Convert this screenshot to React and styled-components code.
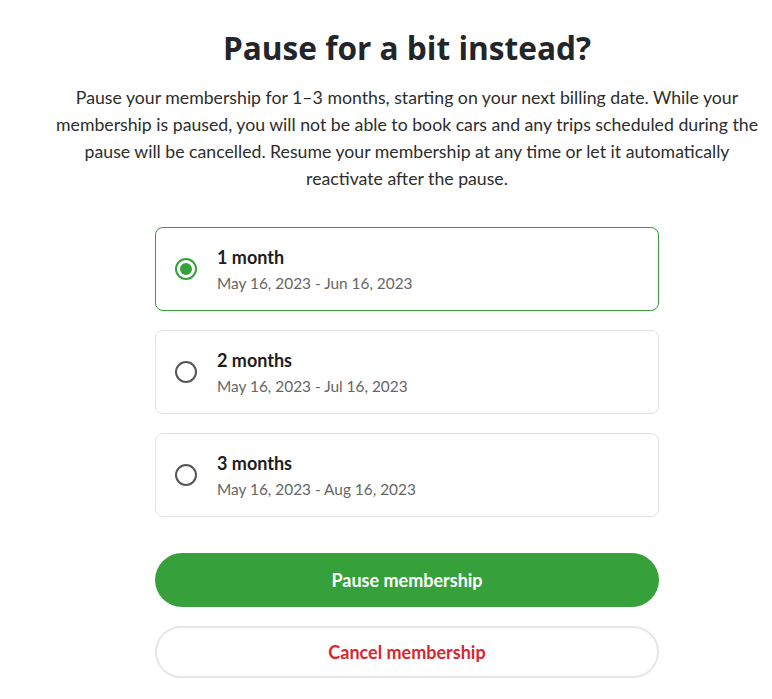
import React, { useState } from "react";
import styled, { createGlobalStyle } from "styled-components";

const GlobalStyle = createGlobalStyle`
  body {
    margin: 0;
    background: #ffffff;
    font-family: Lato, "Liberation Sans", sans-serif;
    color: #222;
  }
`;

const Page = styled.div`
  display: flex;
  justify-content: center;
  padding: 26px 0 0 42px;
`;

const Column = styled.div`
  width: 724px;
  display: flex;
  flex-direction: column;
  align-items: center;
`;

const Title = styled.h1`
  margin: 0;
  font-family: "Open Sans", Lato, sans-serif;
  font-size: 31.6px;
  font-weight: 700;
  color: #22252a;
  line-height: 44px;
`;

const Intro = styled.p`
  margin: 14px 0 0;
  font-size: 17.7px;
  line-height: 27px;
  text-align: center;
  color: #2d2d2d;
`;

const Options = styled.div`
  width: 504px;
  margin-top: 35px;
  display: flex;
  flex-direction: column;
  gap: 19px;
`;

const Option = styled.label`
  display: flex;
  align-items: center;
  gap: 20px;
  height: 84px;
  box-sizing: border-box;
  padding: 0 19px;
  border: 1px solid ${(p) => (p.$active ? "#36a13a" : "#e3e3e3")};
  border-radius: 8px;
  cursor: pointer;
`;

const Radio = styled.span`
  width: 22px;
  height: 22px;
  box-sizing: border-box;
  border-radius: 50%;
  border: 2px solid ${(p) => (p.$active ? "#36a13a" : "#555")};
  display: flex;
  align-items: center;
  justify-content: center;
  flex-shrink: 0;

  &::after {
    content: "";
    width: 12px;
    height: 12px;
    border-radius: 50%;
    background: ${(p) => (p.$active ? "#36a13a" : "transparent")};
  }
`;

const OptionText = styled.div`
  display: flex;
  flex-direction: column;
  gap: 5px;
`;

const OptionTitle = styled.span`
  font-size: 18px;
  font-weight: 700;
  color: #1e1e1e;
  line-height: 22px;
`;

const OptionDates = styled.span`
  font-size: 15.4px;
  color: #666;
  line-height: 20px;
`;

const Actions = styled.div`
  width: 504px;
  margin-top: 36px;
  display: flex;
  flex-direction: column;
  gap: 19px;
`;

const Button = styled.button`
  height: ${(p) => (p.$primary ? "54px" : "52px")};
  border-radius: 27px;
  font-family: Lato, sans-serif;
  font-size: 18px;
  font-weight: 700;
  cursor: pointer;
  background: ${(p) => (p.$primary ? "#36a13a" : "#fff")};
  color: ${(p) => (p.$primary ? "#fff" : "#d9262e")};
  border: ${(p) => (p.$primary ? "none" : "2px solid #e6e6e6")};
`;

const plans = [
  { label: "1 month", dates: "May 16, 2023 - Jun 16, 2023" },
  { label: "2 months", dates: "May 16, 2023 - Jul 16, 2023" },
  { label: "3 months", dates: "May 16, 2023 - Aug 16, 2023" },
];

export default function App() {
  const [selected, setSelected] = useState(0);

  return (
    <Page>
      <GlobalStyle />
      <Column>
        <Title>Pause for a bit instead?</Title>
        <Intro>
          Pause your membership for 1–3 months, starting on your next billing date. While your
          membership is paused, you will not be able to book cars and any trips scheduled during the
          pause will be cancelled. Resume your membership at any time or let it automatically
          reactivate after the pause.
        </Intro>
        <Options>
          {plans.map((plan, i) => (
            <Option key={plan.label} $active={selected === i} onClick={() => setSelected(i)}>
              <Radio $active={selected === i} />
              <OptionText>
                <OptionTitle>{plan.label}</OptionTitle>
                <OptionDates>{plan.dates}</OptionDates>
              </OptionText>
            </Option>
          ))}
        </Options>
        <Actions>
          <Button $primary>Pause membership</Button>
          <Button>Cancel membership</Button>
        </Actions>
      </Column>
    </Page>
  );
}
